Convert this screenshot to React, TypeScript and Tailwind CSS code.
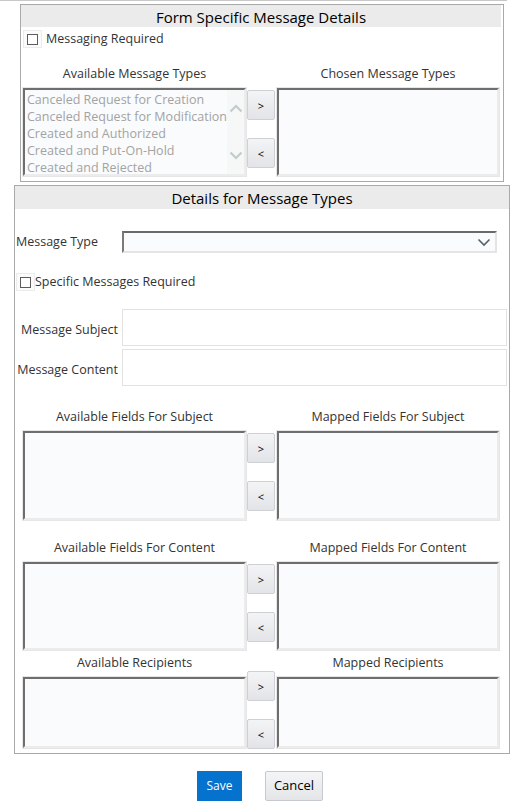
import React from "react";

const FONT = "font-['Open_Sans','Noto_Sans',sans-serif]";

type DualProps = {
  leftLabel: string;
  rightLabel: string;
  boxHeight: string;
  labelGap: string;
  btnTop: string;
  items?: string[];
};

const ListBox = ({ className, children }: { className: string; children?: React.ReactNode }) => (
  <div
    className={`relative bg-[#fafbfd] border-2 border-t-[#6e6e6e] border-l-[#6e6e6e] border-r-[#ececec] border-b-[#ececec] outline outline-1 outline-[#e6e6e6] ${className}`}
  >
    {children}
  </div>
);

const MoveButton = ({ label }: { label: string }) => (
  <button className="w-[28px] h-[30px] rounded-[2px] border border-[#cdd0d4] bg-gradient-to-b from-[#f3f4f6] to-[#e2e4e7] text-[11px] leading-none text-black flex items-center justify-center">
    {label}
  </button>
);

const DualList = (props: DualProps) => {
  const { leftLabel, rightLabel, boxHeight, labelGap, btnTop, items } = props;
  return (
    <div className="flex pl-[8px]">
      <div className="w-[223px] flex flex-col">
        <div className={`h-[16px] leading-[18px] text-center ${labelGap}`}>{leftLabel}</div>
        <ListBox className={`w-[223px] ${boxHeight} overflow-hidden`}>
          {items && (
            <>
              <ul className="pl-[2px] pt-[1px] text-[12.5px] leading-[17px] text-[#a3a3a3] whitespace-nowrap">
                {items.map((item) => (
                  <li key={item}>{item}</li>
                ))}
              </ul>
              <div className="absolute right-0 top-0 bottom-0 w-[17px] bg-[#f6f8f8] flex flex-col items-center justify-between py-[14px]">
                <svg width="14" height="9" viewBox="0 0 14 9" fill="none">
                  <path d="M1.5 7.5 L7 2 L12.5 7.5" stroke="#c3ccc9" strokeWidth="2.2" />
                </svg>
                <svg width="14" height="9" viewBox="0 0 14 9" fill="none">
                  <path d="M1.5 1.5 L7 7 L12.5 1.5" stroke="#c3ccc9" strokeWidth="2.2" />
                </svg>
              </div>
            </>
          )}
        </ListBox>
      </div>
      <div className={`ml-px w-[28px] flex flex-col gap-[18px] ${btnTop}`}>
        <MoveButton label=">" />
        <MoveButton label="<" />
      </div>
      <div className="ml-[2px] w-[222px] flex flex-col">
        <div className={`h-[16px] leading-[18px] text-center ${labelGap}`}>{rightLabel}</div>
        <ListBox className={`w-[222px] ${boxHeight}`} />
      </div>
    </div>
  );
};

const Checkbox = () => (
  <span className="inline-flex w-[19px] h-[18px] items-center justify-center bg-[#fbfbfb] border border-[#ececec]">
    <span className="w-[11px] h-[11px] border border-[#5c5c5c] bg-white" />
  </span>
);

export default function App() {
  const messageTypes = [
    "Canceled Request for Creation",
    "Canceled Request for Modification",
    "Created and Authorized",
    "Created and Put-On-Hold",
    "Created and Rejected",
  ];

  return (
    <div className={`w-[522px] h-[801px] overflow-hidden bg-white text-[12.5px] text-[#333] ${FONT}`}>
      <div className="h-px w-[507px] bg-[#c8c8c8]" />

      {/* Form Specific Message Details */}
      <section className="ml-[20px] mt-[3px] w-[484px] h-[178px] border border-[#a9a9a9]">
        <div className="mr-[2px] h-[22px] bg-[#ebebeb] text-center text-[15px] leading-[24px] text-black">
          Form Specific Message Details
        </div>
        <div className="mt-[3px] ml-[2px] flex items-center gap-[4px] h-[18px]">
          <Checkbox />
          <span className="leading-[16px]">Messaging Required</span>
        </div>
        <div className="mt-[17px] -ml-[6px]">
          <DualList
            leftLabel="Available Message Types"
            rightLabel="Chosen Message Types"
            boxHeight="h-[88px]"
            labelGap="mb-[7px]"
            btnTop="pt-[25px]"
            items={messageTypes}
          />
        </div>
      </section>

      {/* Details for Message Types */}
      <section className="ml-[14px] mt-[3px] w-[496px] h-[569px] border border-[#a9a9a9]">
        <div className="h-[23px] bg-[#ebebeb] text-center text-[15px] leading-[25px] text-black">
          Details for Message Types
        </div>

        <div className="mt-[22px] flex items-center h-[22px]">
          <span className="w-[107px] pl-px">Message Type</span>
          <div className="w-[375px] h-[22px] bg-[#fafbfd] border-2 border-t-[#6a6a6a] border-l-[#7a7a7a] border-r-[#e4e4e4] border-b-[#e4e4e4] flex items-center justify-end pr-[4px]">
            <svg width="14" height="9" viewBox="0 0 14 9" fill="none">
              <path d="M1.5 1.5 L7 7 L12.5 1.5" stroke="#56616c" strokeWidth="1.6" />
            </svg>
          </div>
        </div>

        <div className="mt-[20px] ml-[1px] flex items-center h-[18px]">
          <Checkbox />
          <span className="leading-[16px]">Specific Messages Required</span>
        </div>

        <div className="mt-[18px] flex items-center h-[37px]">
          <span className="w-[104px] pr-px pt-[5px] text-right whitespace-nowrap">Message Subject</span>
          <div className="ml-[3px] w-[385px] h-[37px] border border-[#e2e2e2] bg-white" />
        </div>
        <div className="mt-[3px] flex items-center h-[37px]">
          <span className="w-[104px] pr-px pt-[5px] text-right whitespace-nowrap">Message Content</span>
          <div className="ml-[3px] w-[385px] h-[37px] border border-[#e2e2e2] bg-white" />
        </div>

        <div className="mt-[22px]">
          <DualList
            leftLabel="Available Fields For Subject"
            rightLabel="Mapped Fields For Subject"
            boxHeight="h-[89px]"
            labelGap="mb-[7px]"
            btnTop="pt-[25px]"
          />
        </div>
        <div className="mt-[19px]">
          <DualList
            leftLabel="Available Fields For Content"
            rightLabel="Mapped Fields For Content"
            boxHeight="h-[88px]"
            labelGap="mb-[7px]"
            btnTop="pt-[25px]"
          />
        </div>
        <div className="mt-[4px]">
          <DualList
            leftLabel="Available Recipients"
            rightLabel="Mapped Recipients"
            boxHeight="h-[71px]"
            labelGap="mb-[7px]"
            btnTop="pt-[17px]"
          />
        </div>
      </section>

      <div className="mt-[17px] flex pl-[197px] gap-[23px]">
        <button className="w-[45px] h-[30px] bg-[#0572ce] text-white text-[12px]">Save</button>
        <button className="w-[58px] h-[30px] rounded-[2px] border border-[#c6c9cd] bg-gradient-to-b from-[#f4f5f6] to-[#e3e5e8] text-[13px] text-black">
          Cancel
        </button>
      </div>
    </div>
  );
}
